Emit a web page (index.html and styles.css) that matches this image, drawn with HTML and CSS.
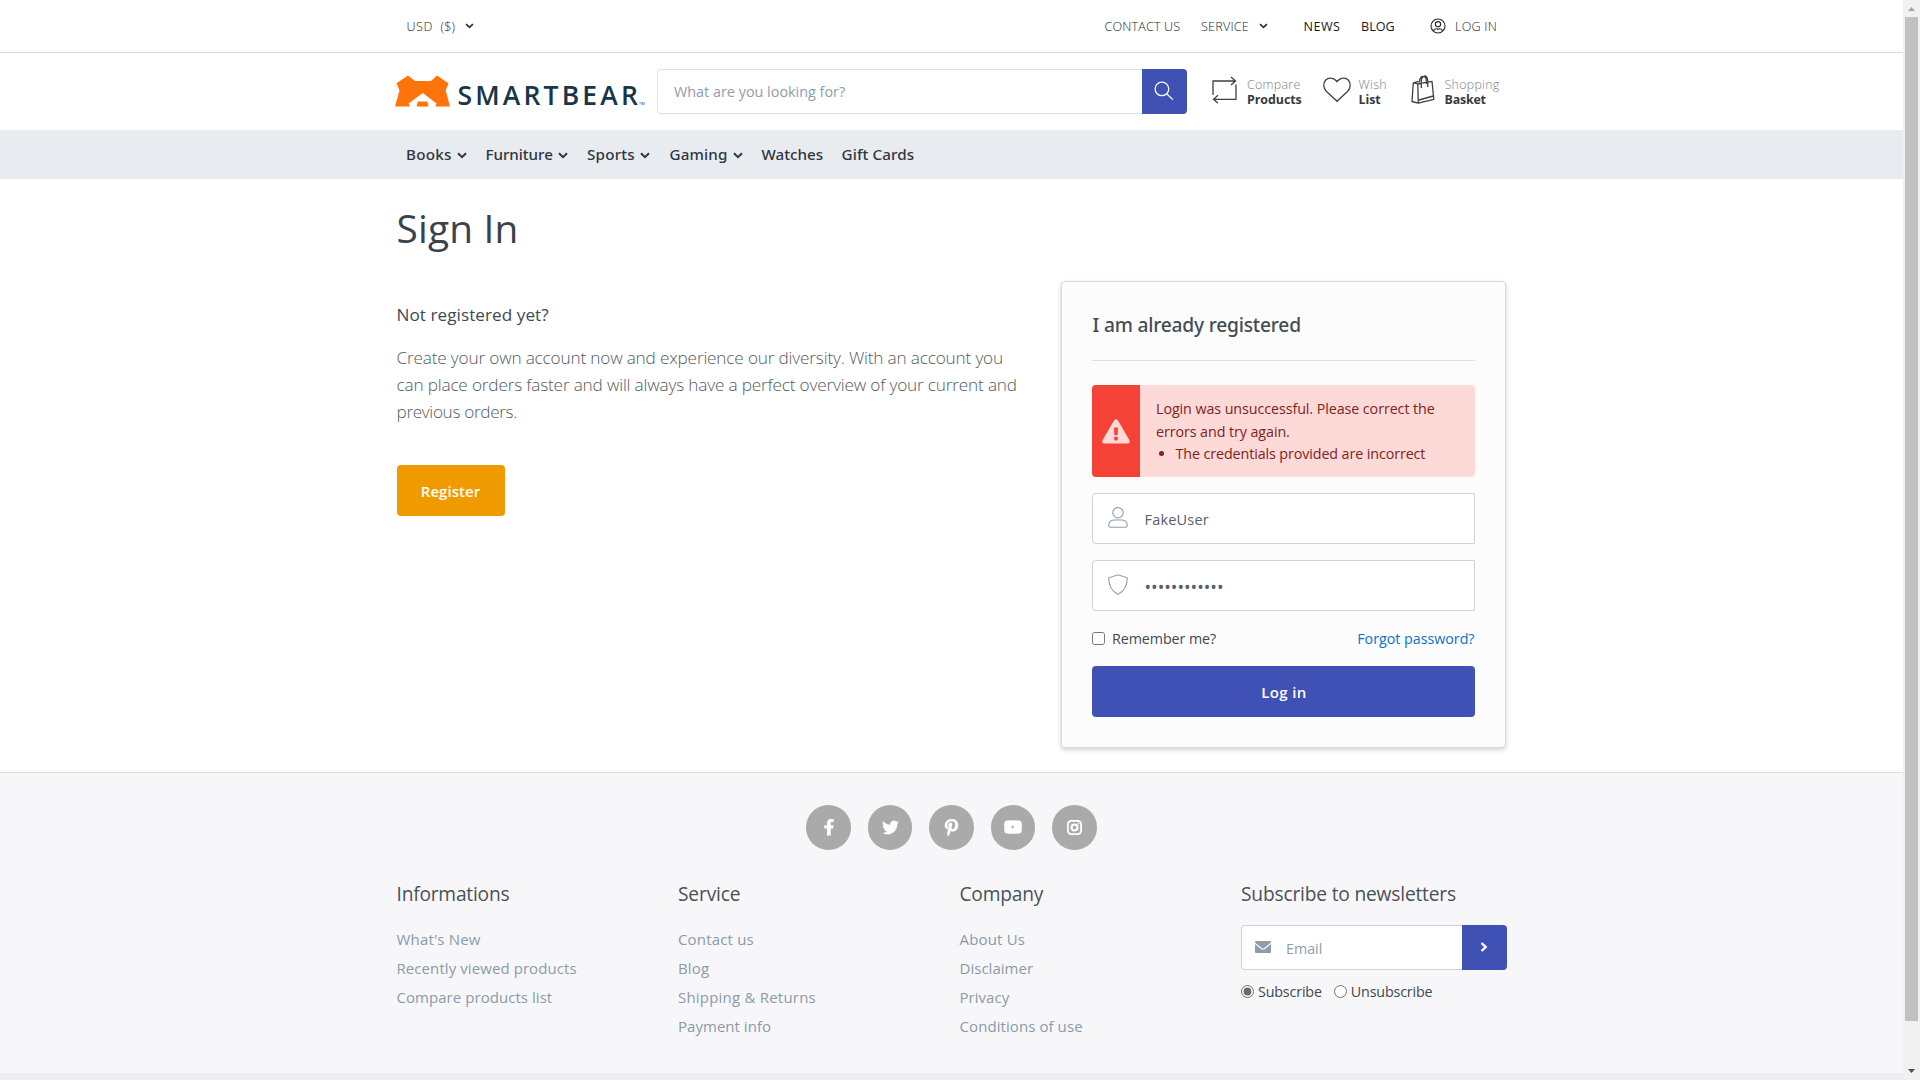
FILE: index.html
```html
<!DOCTYPE html>
<html lang="en">
<head>
<meta charset="utf-8">
<title>Sign In</title>
<link rel="stylesheet" href="styles.css">
</head>
<body>
<svg class="sprite" width="0" height="0">
  <symbol id="chev" viewBox="0 0 10 7"><path d="M1 1.2 5 5.1 9 1.2" fill="none" stroke="currentColor" stroke-width="2"/></symbol>
</svg>
<div class="page">
  <header>
    <div class="topbar">
      <div class="container topbar-row">
        <a class="currency"><span class="usd">USD</span><span class="sym">($)</span><svg class="chev-sm"><use href="#chev"/></svg></a>
        <nav class="topmenu">
          <a class="tm-contact">CONTACT US</a>
          <a class="tm-service">SERVICE<svg class="chev-sm"><use href="#chev"/></svg></a>
          <a class="tm-news">NEWS</a>
          <a class="tm-blog">BLOG</a>
          <a class="tm-login">
            <svg class="user-circle" viewBox="0 0 16 16" fill="none" stroke="currentColor" stroke-width="1.1"><circle cx="8" cy="8" r="7"/><circle cx="8" cy="6.2" r="2.6"/><path d="M3.400 13c.4-1.600 1.500-2.200 2.800-2.200.7 0 1 .3 1.800.3s1.100-.3 1.800-.3c1.300 0 2.400.6 2.800 2.200"/></svg>LOG IN</a>
        </nav>
      </div>
    </div>
    <div class="container brandbar">
      <a class="logo">
        <svg class="bear" viewBox="0 0 55 32"><path fill="#ff730b" d="M0 31.500 4.500 15.500 1.500 8.300 13 .5 20 6H36L42 .5 53.500 8.300 50.700 15.500 55 31.500H40.300L41.500 28.500 27.800 18 13.600 28.500 15 31.500ZM21.600 31.500 22.800 26.500H32.400L33.600 31.500Z"/></svg>
        <span class="wordmark">SMARTBEAR</span><span class="tm">TM</span>
      </a>
      <form class="search">
        <input class="search-input" type="text" placeholder="What are you looking for?">
        <button class="search-btn" type="button"><svg viewBox="0 0 22 22" fill="none" stroke="#fff" stroke-width="1.400"><circle cx="8.700" cy="8.700" r="7.500"/><path d="m14 14 6.700 6.500"/></svg></button>
      </form>
      <a class="tool tool-compare">
        <svg width="25" height="28" viewBox="0 0 25 28" fill="none" stroke="#3a4149" stroke-width="1.300"><path d="M1 19V5H23.500M19 1l4.500 4L19 9M24 8.500V23.300H1.500M6 19.300l-4.500 4L6 27.300"/></svg>
        <span class="tool-text"><span>Compare</span><b class="b-products">Products</b></span>
      </a>
      <a class="tool tool-wish">
        <svg width="28" height="26" viewBox="0 0 28 26" fill="none" stroke="#3a4149" stroke-width="1.300"><path d="M14 24.300 3.500 14.500C-.5 10.500.5 5.500 2.700 3 5.500.2 10.500.2 14 4.500 17.500.2 22.500.2 25.300 3c2.200 2.500 3.200 7.500-.8 11.500Z"/></svg>
        <span class="tool-text"><span class="t-wish">Wish</span><b>List</b></span>
      </a>
      <a class="tool tool-basket">
        <svg width="24" height="30" viewBox="0 0 24 30" fill="none" stroke="#3a4149" stroke-width="1.300" stroke-linejoin="round"><path d="M6.800 8.800 21 6.300 22.800 24.300 7.300 28.200ZM6.800 8.800 2.300 7.800 1 26.500 7.300 28.200M2.300 7.800 7.500 6.500M8 25 22.300 21M10.300 13V6C10.800 0 15 .2 15.300 5.500V9M8.300 7.500C8.800 1.500 11.500.8 12.300 2M12.500 2C14.500-.2 16.500 1.500 16.800 6V12"/></svg>
        <span class="tool-text"><span>Shopping</span><b class="b-basket">Basket</b></span>
      </a>
    </div>
    <nav class="mainnav">
      <div class="container mainnav-row">
        <a class="n-books">Books<svg class="chev"><use href="#chev"/></svg></a>
        <a class="n-furn">Furniture<svg class="chev"><use href="#chev"/></svg></a>
        <a class="n-sports">Sports<svg class="chev"><use href="#chev"/></svg></a>
        <a class="n-gaming">Gaming<svg class="chev"><use href="#chev"/></svg></a>
        <a class="n-watches">Watches</a>
        <a class="n-gift">Gift Cards</a>
      </div>
    </nav>
  </header>

  <main class="container">
    <h1>Sign In</h1>
    <div class="columns">
      <section class="register">
        <h2>Not registered yet?</h2>
        <p>Create your own account now and experience our diversity. With an account you<br>can place orders faster and will always have a perfect overview of your current and<br><span class="lead-end">previous orders.</span></p>
        <button class="btn btn-register" type="button">Register</button>
      </section>
      <section class="card">
        <h3>I am already registered</h3>
        <div class="alert">
          <div class="alert-icon"><svg width="28" height="25" viewBox="0 0 28 25"><path fill="#fdd9d7" fill-rule="evenodd" d="M12 1.500q2-2.600 4 0L27.600 21.500Q28.500 24 26 24.500H2Q-.5 24 .4 21.500ZM12 8.500 12.400 16.200H15.600L16 8.500ZM14 17.500A2.100 2.100 0 1 0 14 21.700 2.100 2.100 0 1 0 14 17.500Z"/></svg></div>
          <div class="alert-text">Login was unsuccessful. Please correct the<br>errors and try again.
            <ul><li>The credentials provided are incorrect</li></ul>
          </div>
        </div>
        <label class="field">
          <svg width="20" height="21" viewBox="0 0 20 21" fill="none" stroke="#8f9dab" stroke-width="1.100"><circle cx="10" cy="5.800" r="5.200"/><path d="M.7 18.300C1 15 3.500 13 6.500 13H13.500c3 0 5.500 2 5.800 5.300 0 1.300-.4 1.900-1.500 1.900H2.200C1.100 20.200.7 19.600.7 18.300Z"/></svg>
          <input class="user" type="text" value="FakeUser">
        </label>
        <label class="field">
          <svg width="20" height="21" viewBox="0 0 20 21" fill="none" stroke="#8f9dab" stroke-width="1.100"><path d="M10 .8 19.300 3.800C19.300 11 16 17.500 10 20.200 4 17.500.7 11 .7 3.800Z"/></svg>
          <input class="pass" type="password" value="............">
        </label>
        <div class="options">
          <label class="remember"><input type="checkbox">Remember me?</label>
          <a class="forgot">Forgot password?</a>
        </div>
        <button class="btn btn-login" type="button">Log in</button>
      </section>
    </div>
  </main>

  <footer>
    <div class="social">
      <a><svg width="18" height="18" viewBox="0 0 18 18"><path fill="#fff" d="M7 17.500V10.500H4.300V7.200H7V5C7 2.200 8.600.9 11 .9H13.700V4H12C11 4 10.700 4.500 10.700 5.300V7.200H13.600L13.100 10.500H10.700V17.500Z"/></svg></a>
      <a><svg width="17" height="17" viewBox="0 0 24 24"><path fill="#fff" d="M23.950 4.570a10 10 0 0 1-2.820.77 4.960 4.960 0 0 0 2.160-2.720c-.95.55-2 .95-3.120 1.180a4.920 4.920 0 0 0-8.380 4.480C7.690 8.090 4.070 6.130 1.640 3.160a4.820 4.820 0 0 0-.67 2.480c0 1.710.87 3.210 2.190 4.100a4.900 4.900 0 0 1-2.230-.62v.06a4.920 4.920 0 0 0 3.950 4.830 5 5 0 0 1-2.210.08 4.940 4.940 0 0 0 4.600 3.420A9.870 9.870 0 0 1 0 19.540a13.990 13.990 0 0 0 7.550 2.210c9.050 0 14-7.500 14-13.980 0-.21 0-.42-.02-.63a9.940 9.940 0 0 0 2.420-2.570Z"/></svg></a>
      <a><svg width="15" height="17" viewBox="0 0 384 512"><path fill="#fff" stroke="#fff" stroke-width="26" d="M204 6.500C101.400 6.500 0 74.900 0 185.600 0 256 39.600 296 63.600 296c9.900 0 15.600-27.600 15.600-35.400 0-9.300-23.700-29.100-23.700-67.800 0-80.400 61.200-137.400 140.400-137.400 68.100 0 118.500 38.700 118.500 109.800 0 53.100-21.300 152.700-90.300 152.700-24.900 0-46.200-18-46.200-43.800 0-37.800 26.400-74.400 26.400-113.400 0-66.200-93.900-54.200-93.900 25.800 0 16.800 2.100 35.400 9.600 50.700-13.800 59.400-42 147.900-42 209.100 0 18.900 2.700 37.500 4.500 56.400 3.400 3.800 1.700 3.400 6.900 1.500 50.400-69 48.600-82.500 71.400-172.800 12.300 23.400 44.100 36 69.300 36 106.200 0 153.900-103.500 153.900-196.800C384 71.300 298.200 6.500 204 6.500z"/></svg></a>
      <a><svg width="18" height="14" viewBox="0 0 18 14"><path fill="#fff" fill-rule="evenodd" d="M3 .6Q9-.1 15 .6 17.600.8 17.800 3.500V10.500Q17.600 13.200 15 13.400 9 14.100 3 13.400.4 13.200.2 10.500V3.500Q.4.800 3 .6ZM7.700 5.300V8.700L10.700 7Z"/></svg></a>
      <a><svg width="15" height="15" viewBox="0 0 15 15" fill="none" stroke="#fff"><rect x=".9" y=".9" width="13.200" height="13.200" rx="3.300" stroke-width="1.800"/><circle cx="7.500" cy="7.500" r="3" stroke-width="2.200"/><circle cx="11.400" cy="3.600" r=".5"/></svg></a>
    </div>
    <div class="container links">
      <section>
        <h4>Informations</h4>
        <a>What's New</a><a class="l-recent">Recently viewed products</a><a class="l-compare">Compare products list</a>
      </section>
      <section>
        <h4 class="h-service">Service</h4>
        <a>Contact us</a><a>Blog</a><a class="l-ship">Shipping &amp; Returns</a><a class="l-pay">Payment info</a>
      </section>
      <section>
        <h4>Company</h4>
        <a>About Us</a><a class="l-disc">Disclaimer</a><a class="l-disc">Privacy</a><a class="l-recent">Conditions of use</a>
      </section>
      <section>
        <h4 class="h-news">Subscribe to newsletters</h4>
        <form class="newsletter">
          <div class="news-field"><svg width="16" height="12" viewBox="0 0 16 12"><path fill="#8f9dab" d="M1 0H15Q16 0 16 1V1.600L9.300 7Q8 8 6.700 7L0 1.600V1Q0 0 1 0ZM0 3 6 7.900Q8 9.400 10 7.900L16 3V11Q16 12 15 12H1Q0 12 0 11Z"/></svg><input type="text" placeholder="Email"></div>
          <button type="button"><svg width="8" height="10" viewBox="0 0 8 10"><path d="M1.500 1 5.700 5 1.500 9" fill="none" stroke="#fff" stroke-width="2.400"/></svg></button>
        </form>
        <div class="radios">
          <label><input type="radio" name="news" checked>Subscribe</label>
          <label><input type="radio" name="news">Unsubscribe</label>
        </div>
      </section>
    </div>
    <div class="bottombar"></div>
  </footer>
</div>
<div class="scrollbar">
  <svg width="7" height="4" viewBox="0 0 7 4"><path fill="#a3a3a3" d="M0 4 3.500 0 7 4Z"/></svg>
  <div class="thumb"></div>
  <svg width="7" height="4" viewBox="0 0 7 4"><path fill="#505050" d="M0 0H7L3.500 4Z"/></svg>
</div>
</body>
</html>
```
FILE: styles.css
```css
* { box-sizing: border-box; }
body {
  margin: 0;
  width: 1920px;
  height: 1080px;
  overflow: hidden;
  display: grid;
  grid-template-columns: 1903px 17px;
  background: #fff;
  color: #404850;
  font-family: "Open Sans", "Noto Sans", sans-serif;
  font-size: 15px;
}
.sprite { position: absolute; }
h1, h2, h3, h4, p, ul { margin: 0; padding: 0; font-weight: 400; }
svg { flex: none; display: block; }
input, button { font: inherit; letter-spacing: inherit; margin: 0; outline: 0; }
a { white-space: nowrap; }
.page { height: 1080px; display: flex; flex-direction: column; overflow: hidden; }
.container { width: 1110px; margin: 0 auto; }

/* top bar */
.topbar { height: 53px; border-bottom: 1px solid #dcdcdf; }
.topbar-row { height: 52px; display: flex; align-items: center; justify-content: space-between; font-size: 12.6px; font-weight: 300; color: #20262d; letter-spacing: .2px; }
.topbar-row a { display: flex; align-items: center; }
.currency { padding-left: 10px; }
.usd { width: 34px; letter-spacing: .5px; }
.sym { width: 24.500px; }
.chev-sm { width: 9px; height: 6px; color: #2c323a; }
.topmenu { display: flex; }
.tm-contact { width: 96.500px; letter-spacing: .15px; }
.tm-service { width: 102.500px; gap: 10px; }
.tm-news { width: 57.500px; font-weight: 400; letter-spacing: .5px; color: #16191d; }
.tm-blog { width: 69px; font-weight: 400; letter-spacing: 0; color: #16191d; }
.tm-login { width: 76.500px; gap: 9px; }
.user-circle { width: 16px; height: 16px; margin-top: -1px; }

/* brand bar */
.brandbar { height: 77px; display: flex; align-items: center; }
.logo { width: 260.500px; display: flex; align-items: flex-end; }
.bear { width: 55px; height: 32px; margin: 0 0 1px -1.500px; }
.wordmark { margin-left: 7.500px; color: #173647; font: 600 26.500px/26px "Open Sans", sans-serif; letter-spacing: 3.150px; width: 182.500px; height: 26px; margin-bottom: 0; }
.tm { font-size: 4px; line-height: 6px; color: #173647; margin: 0 0 1px -1px; }
.search { display: flex; width: 530px; height: 45px; }
.search-input { flex: 1; border: 1px solid #dee1e4; border-right: 0; border-radius: 4px 0 0 4px; padding: 0 16px; font-size: 14.400px; color: #404850; background: #fff; }
input::placeholder { color: #8f9dab; opacity: 1; }
.search-btn { width: 45px; padding: 0; border: 0; border-radius: 0 4px 4px 0; background: #3f51b5; display: grid; place-items: center; }
.search-btn svg { width: 20px; height: 20px; margin: -2px 0 0 -2px; }
.tool { display: flex; align-items: center; }
.tool svg { margin-top: -3px; }
.tool-text { display: flex; flex-direction: column; font-size: 12.400px; line-height: 15px; margin-top: 1px; }
.tool-text span { font-weight: 300; color: #7c8085; letter-spacing: .3px; }
.tool-text .t-wish { letter-spacing: .4px; }
.tool-text b { color: #343a42; letter-spacing: -.03px; }
.tool-text .b-basket { letter-spacing: -.18px; }
.tool-compare { margin-left: 25px; width: 110.500px; gap: 10px; }
.tool-wish { width: 88px; gap: 8px; }
.tool-basket { gap: 10px; }

/* main navigation */
.mainnav { height: 49px; background: #e8ebf0; }
.mainnav-row { height: 49px; display: flex; align-items: center; padding-left: 9.500px; font-family: "Noto Sans", sans-serif; font-size: 15.200px; line-height: 20px; padding-bottom: 2px; font-weight: 500; color: #2f353d; letter-spacing: .13px; }
.mainnav-row a { display: flex; align-items: center; }
.chev { width: 10px; height: 7px; margin: 4px 0 0 5.500px; }
.n-books { width: 79.500px; letter-spacing: .24px; }
.n-furn { width: 101.500px; letter-spacing: -.05px; }
.n-sports { width: 82.500px; letter-spacing: .2px; }
.n-gaming { width: 92px; letter-spacing: .15px; }
.n-watches { width: 80px; letter-spacing: 0; }

/* sign-in page */
main { height: 593px; flex: none; padding-top: 25px; }
h1 { font-size: 38.800px; line-height: 48px; letter-spacing: .2px; color: #3a424c; }
.columns { display: flex; justify-content: space-between; align-items: flex-start; margin-top: 29px; }
.register { padding-top: 20px; }
h2 { font-size: 17.200px; line-height: 27px; letter-spacing: .03px; color: #42494f; }
.register p { margin: 16px 0 40px; font-size: 17.200px; line-height: 27px; font-weight: 300; letter-spacing: -.175px; color: #555b62; white-space: nowrap; }
.lead-end { letter-spacing: -.35px; }
.btn { display: block; height: 51px; padding: 0; border: 0; border-radius: 4px; color: #fff; font-size: 15px; font-weight: 600; }
.btn-register { width: 108px; background: #ef9b00; letter-spacing: .05px; }
.card { width: 445px; height: 467px; margin-right: 1px; padding: 28px 30px; border: 1px solid #dadbdd; border-radius: 4px; background: #fcfcfc; box-shadow: 0 2px 5px rgba(0, 0, 0, .18); }
h3 { height: 51px; font-family: "Noto Sans", sans-serif; font-size: 19.200px; font-weight: 500; line-height: 30px; letter-spacing: -.2px; padding-left: 1px; border-bottom: 1px solid #dfe1e4; color: #454c55; }
.alert { margin: 24px 0 16px; height: 92px; display: flex; border-radius: 4px; overflow: hidden; background: #fdd9d7; color: #7f231c; }
.alert-icon { width: 48px; background: #f44336; display: grid; place-items: center; }
.alert-icon svg { margin-left: 1px; }
.alert-text { padding: 13px 0 0 16.500px; font-size: 14.300px; line-height: 22.500px; letter-spacing: -.08px; white-space: nowrap; }
.alert-text ul { padding-left: 19.500px; letter-spacing: -.1px; }
.field { height: 51px; margin-bottom: 16px; padding-left: 15px; display: flex; align-items: center; gap: 15px; border: 1px solid #ced4da; border-radius: 4px 0 0 4px; background: #fff; }
.field svg { margin-top: -3px; }
.field input { flex: 1; min-width: 0; border: 0; padding: 2px 2px 0; height: 40px; background: none; color: #596069; font-size: 14.500px; letter-spacing: .2px; }
.field .pass { font-size: 17.500px; letter-spacing: 0; }
.options { height: 39px; margin-top: -8px; margin-bottom: 8px; display: flex; justify-content: space-between; align-items: center; font-size: 14.300px; letter-spacing: -.08px; }
.remember { display: flex; align-items: center; gap: 7.500px; color: #404850; }
.remember input { width: 13px; height: 13px; }
.forgot { color: #0b72cc; letter-spacing: -.03px; }
.btn-login { width: 100%; padding-left: 2px; background: #3f51b5; letter-spacing: .4px; }

/* footer */
footer { flex: 1; display: flex; flex-direction: column; border-top: 1px solid #dcdddf; background: #f7f7fa; }
.social { display: flex; justify-content: center; gap: 17px; padding: 32px 0 29px; }
.social a { width: 44.500px; height: 44.500px; border-radius: 50%; background: #aaa; display: grid; place-items: center; }
.links { flex: 1; display: grid; grid-template-columns: 281.500px 281.500px 281.500px 1fr; }
.links a { display: block; font-size: 15px; line-height: 29px; color: #8b9aa9; letter-spacing: .17px; }
.links .l-recent { letter-spacing: .08px; }
.links .l-compare { letter-spacing: .05px; }
.links .l-ship { letter-spacing: .21px; }
.links .l-pay, .links .l-disc { letter-spacing: .03px; }
h4 { font-size: 19.200px; line-height: 30px; margin-bottom: 16px; letter-spacing: -.22px; color: #4b5157; white-space: nowrap; }
.h-service { letter-spacing: -.15px; }
.h-news { letter-spacing: -.19px; }
.newsletter { display: flex; height: 45px; }
.news-field { flex: 1; display: flex; align-items: center; gap: 13px; padding-left: 13px; border: 1px solid #ced4da; border-right: 0; border-radius: 4px 0 0 4px; background: #fff; }
.news-field input { width: 150px; border: 0; padding: 2px 2px 0; background: none; font-size: 14.300px; letter-spacing: 0; }
.newsletter button { width: 45px; padding: 0; border: 0; border-radius: 0 4px 4px 0; background: #3f51b5; display: grid; place-items: center; }
.radios { display: flex; gap: 12px; margin-top: 11px; font-size: 14.300px; line-height: 22px; color: #404850; letter-spacing: -.16px; }
.radios label { display: flex; align-items: center; gap: 4px; }
.radios input { width: 13px; height: 13px; accent-color: #6b6b6b; }
.bottombar { height: 7px; background: #ededf0; }

/* scrollbar */
.scrollbar { height: 1080px; background: #f1f1f1; display: flex; flex-direction: column; align-items: center; padding: 7px 0; }
.thumb { width: 13px; height: 1004px; margin: 6px 0 auto; background: #c1c1c1; }
```
